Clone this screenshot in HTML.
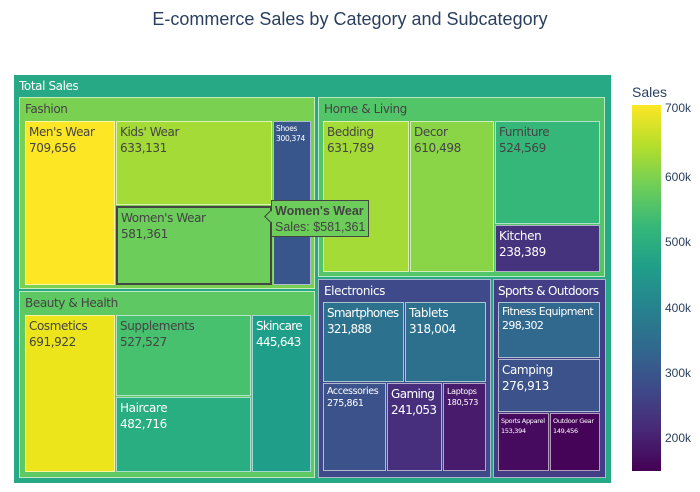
<!DOCTYPE html>
<html><head><meta charset="utf-8"><style>
body{margin:0;width:700px;height:492px;background:#fff;position:relative;overflow:hidden;font-family:"DejaVu Sans","Liberation Sans",sans-serif}
.t{position:absolute;box-sizing:border-box;border:1px solid rgba(255,255,255,0.6);font-size:12px;letter-spacing:-0.4px;line-height:16px;padding:2px 3px;color:#444;white-space:nowrap;overflow:hidden}
.w{color:#fff}
.s{font-size:7.5px;line-height:10px;padding:2px 2px;letter-spacing:-0.3px}
.h{padding:3px 5px}
</style></head><body>
<div style="position:absolute;left:0;width:700px;top:9px;text-align:center;font-family:'Liberation Sans',sans-serif;font-size:18px;color:#2a3f5f">E-commerce Sales by Category and Subcategory</div>

<div class="t w h" style="left:14px;top:75px;width:597px;height:408px;background:#26a984;border:none">Total Sales</div>
<div class="t h" style="left:19px;top:97px;width:296px;height:192px;background:#7ad151">Fashion</div>
<div class="t h" style="left:318px;top:97px;width:287px;height:180px;background:#52c569">Home &amp; Living</div>
<div class="t h" style="left:19px;top:291px;width:296px;height:187px;background:#5ec962">Beauty &amp; Health</div>
<div class="t w h" style="left:318px;top:279px;width:173px;height:199px;background:#3e4a89">Electronics</div>
<div class="t w h" style="left:493px;top:279px;width:113px;height:199px;background:#433e85;letter-spacing:-0.6px;padding-left:4px">Sports &amp; Outdoors</div>

<div class="t" style="left:25px;top:121px;width:90px;height:164px;background:#fde725">Men's Wear<br>709,656</div>
<div class="t" style="left:116px;top:121px;width:156px;height:84px;background:#a5db36">Kids' Wear<br>633,131</div>
<div class="t" style="left:116px;top:206px;width:156px;height:79px;background:#6ccd5a;border:2px solid #444">Women's Wear<br>581,361</div>
<div class="t w s" style="left:273px;top:121px;width:38px;height:164px;background:#39568c">Shoes<br>300,374</div>

<div class="t" style="left:323px;top:121px;width:86px;height:151px;background:#a5db36">Bedding<br>631,789</div>
<div class="t" style="left:410px;top:121px;width:84px;height:151px;background:#8ad547">Decor<br>610,498</div>
<div class="t" style="left:495px;top:121px;width:105px;height:103px;background:#35b779">Furniture<br>524,569</div>
<div class="t w" style="left:495px;top:225px;width:105px;height:47px;background:#46337e">Kitchen<br>238,389</div>

<div class="t" style="left:25px;top:315px;width:90px;height:157px;background:#ece51b">Cosmetics<br>691,922</div>
<div class="t" style="left:116px;top:315px;width:135px;height:81px;background:#48c16e">Supplements<br>527,527</div>
<div class="t w" style="left:116px;top:397px;width:135px;height:75px;background:#28ae80">Haircare<br>482,716</div>
<div class="t w" style="left:252px;top:315px;width:59px;height:157px;background:#1f9e89;letter-spacing:-0.7px">Skincare<br>445,643</div>

<div class="t w" style="left:323px;top:302px;width:81px;height:80px;background:#2c728e;letter-spacing:-0.8px">Smartphones<br>321,888</div>
<div class="t w" style="left:405px;top:302px;width:81px;height:80px;background:#2d708e">Tablets<br>318,004</div>
<div class="t w" style="left:323px;top:383px;width:63px;height:88px;background:#3b528b;font-size:9.5px;line-height:12px;letter-spacing:-0.4px">Accessories<br>275,861</div>
<div class="t w" style="left:387px;top:383px;width:55px;height:88px;background:#472f7d;letter-spacing:-0.6px">Gaming<br>241,053</div>
<div class="t w" style="left:443px;top:383px;width:43px;height:88px;background:#481b6d;font-size:8px;line-height:11px;letter-spacing:-0.3px">Laptops<br>180,573</div>

<div class="t w" style="left:498px;top:302px;width:102px;height:56px;background:#31688e;font-size:11px;line-height:14px;letter-spacing:-0.6px">Fitness Equipment<br>298,302</div>
<div class="t w" style="left:498px;top:359px;width:102px;height:53px;background:#3b528b">Camping<br>276,913</div>
<div class="t w s" style="left:498px;top:413px;width:51px;height:58px;background:#460b5e;font-size:6.5px">Sports Apparel<br>153,394</div>
<div class="t w s" style="left:550px;top:413px;width:50px;height:58px;background:#450457;font-size:6.5px">Outdoor Gear<br>149,456</div>

<!-- tooltip -->
<div style="position:absolute;left:271px;top:200px;width:98px;height:37px;box-sizing:border-box;background:#6ccd5a;border:1px solid #444;font-family:'Liberation Sans',sans-serif;font-size:12.5px;color:#444;padding:2px 3px;line-height:16px;white-space:nowrap;overflow:visible"><b>Women's Wear</b><br>Sales: $581,361</div>
<div style="position:absolute;left:266px;top:212px;width:8px;height:8px;background:#6ccd5a;border-left:1px solid #444;border-bottom:1px solid #444;transform:rotate(45deg)"></div>

<!-- colorbar -->
<div style="position:absolute;left:632px;top:84px;font-family:'Liberation Sans',sans-serif;font-size:14px;color:#2a3f5f">Sales</div>
<div style="position:absolute;left:632px;top:105px;width:29px;height:366px;background:linear-gradient(to top,#440154,#482878,#3e4989,#31688e,#26828e,#1f9e89,#35b779,#6ece58,#b5de2b,#fde725)"></div>
<div style="position:absolute;left:665px;font-family:'Liberation Sans',sans-serif;font-size:12px;color:#2a3f5f;line-height:14px">
<div style="position:absolute;top:101px">700k</div>
<div style="position:absolute;top:170px">600k</div>
<div style="position:absolute;top:235px">500k</div>
<div style="position:absolute;top:301px">400k</div>
<div style="position:absolute;top:366px">300k</div>
<div style="position:absolute;top:431px">200k</div>
</div>
</body></html>
